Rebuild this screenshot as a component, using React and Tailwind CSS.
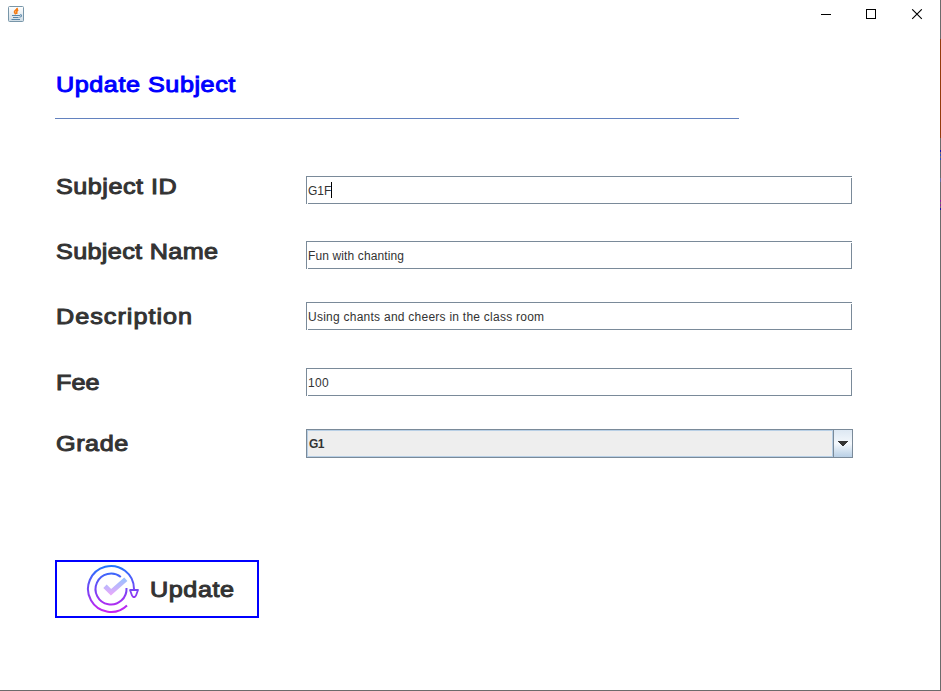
const labelFont =
  "font-['Liberation_Sans',Arial,sans-serif] text-[22.5px] leading-[28px] whitespace-nowrap [-webkit-text-stroke:1px_currentColor]";

const stretch = "inline-block origin-left scale-x-[1.12]";

function TextField({ value, caret, textClass = "" }) {
  return (
    <div className="relative flex h-[28px] w-[546px] items-center border border-[#7a8a99] bg-white pt-[2px] pl-[1px] font-['Liberation_Sans',Arial,sans-serif] text-[12px] text-[#333333]">
      <span className={`whitespace-pre ${textClass}`}>{value}</span>
      {caret && <span className="-mt-[2px] h-[16px] w-px bg-black" />}
      <span className="absolute top-0 -right-px h-px w-px bg-white" />
      <span className="absolute bottom-[-1px] left-0 h-px w-px bg-white" />
    </div>
  );
}

function ComboBox({ value }) {
  return (
    <div className="flex h-[29px] w-[547px] border border-[#7a8a99] bg-[#eeeeee]">
      <div className="flex flex-1 items-center border border-[#b8cfe5] font-['Liberation_Sans',Arial,sans-serif] text-[12px] font-bold tracking-[-0.6px] text-[#333333]">
        <span className="pl-px">{value}</span>
      </div>
      <div className="flex w-[19px] items-center justify-center border-l border-[#7a8a99] bg-linear-to-b from-[#dde8f3] via-[#f4f8fc] to-[#b8cfe5]">
        <svg width="10" height="5" viewBox="0 0 10 5" shapeRendering="crispEdges">
          <path d="M0 0H10V1H9V2H8V3H7V4H6V5H4V4H3V3H2V2H1V1H0Z" fill="#333333" />
        </svg>
      </div>
    </div>
  );
}

function JavaIcon() {
  return (
    <svg width="16" height="16" viewBox="0 0 16 16" fill="none">
      <defs>
        <linearGradient id="java-bg" x1="0" y1="0" x2="0" y2="1">
          <stop offset="0" stopColor="#ffffff" />
          <stop offset="1" stopColor="#cfdce5" />
        </linearGradient>
      </defs>
      <rect x="0.5" y="0.5" width="15" height="15" rx="1" fill="url(#java-bg)" stroke="#7896a9" />
      <path d="M9.2 1.8C9.6 4 5.8 4.4 6.6 6.4L7.8 8.2M10.2 3.8C8 4.8 8.8 6 8.6 7.8" stroke="#f57c14" strokeWidth="1.7" />
      <path d="M4 9.5H12M5 11.5H10.5M3.5 13.5H12M12 8.8H13.4V10.6L11.4 11.2" stroke="#5b87a8" strokeWidth="1" />
    </svg>
  );
}

function UpdateIcon() {
  return (
    <svg width="54" height="50" viewBox="0 0 54 50" fill="none">
      <defs>
        <linearGradient id="ring" gradientUnits="userSpaceOnUse" x1="0" y1="1" x2="0" y2="49">
          <stop offset="0" stopColor="#1f78ff" />
          <stop offset="0.5" stopColor="#7446f5" />
          <stop offset="1" stopColor="#cc21f0" />
        </linearGradient>
        <linearGradient id="check" gradientUnits="userSpaceOnUse" x1="0" y1="13" x2="0" y2="31">
          <stop offset="0" stopColor="#8fc4ff" />
          <stop offset="1" stopColor="#eba8fa" />
        </linearGradient>
      </defs>
      <g stroke="url(#ring)" strokeWidth="2">
        <path d="M41 41.5A23 23 0 1 1 48 25" />
        <path d="M34.8 13A15.5 15.5 0 1 0 40.5 24" />
        <path d="M44 26H52L50 31.5L48.8 33H47.2L46 31.5Z" strokeLinejoin="round" strokeWidth="1.8" />
      </g>
      <path d="M19 22.3L25 28.2L39.8 15.2" stroke="url(#check)" strokeWidth="4.8" />
    </svg>
  );
}

function Row({ label, labelClass, children, className }) {
  return (
    <div className={`flex items-start ${className}`}>
      <div className={`w-[251px] shrink-0 pl-[0.5px] text-[#333333] ${labelFont} ${labelClass}`}>
        <span className={stretch}>{label}</span>
      </div>
      {children}
    </div>
  );
}

export default function App() {
  return (
    <div className="flex h-[691px] w-[941px] overflow-hidden bg-white">
      <div className="flex w-[940px] flex-col border-b border-[#6b6b6b]">
        <header className="flex h-[30px] shrink-0 items-start justify-between">
          <div className="pt-[6px] pl-[8px]">
            <JavaIcon />
          </div>
          <div className="flex pt-[9px] pr-[17px]">
            <svg width="102" height="11" viewBox="0 0 102 11" fill="none" stroke="#000">
              <path d="M0 5.5H10M45.5 0.5H54.5V9.5H45.5Z" shapeRendering="crispEdges" />
              <path d="M91.2 0.3L100.8 9.9M100.8 0.3L91.2 9.9" strokeWidth="1.1" />
            </svg>
          </div>
        </header>
        <main className="flex flex-col items-start pl-[55px]">
          <h1 className={`mt-[41px] pl-[0.5px] text-[#0000ff] ${labelFont}`}>
            <span className={`${stretch} tracking-[0.48px]`}>Update Subject</span>
          </h1>
          <div className="mt-[19px] h-px w-[684px] bg-[#6382bf]" />
          <div className="mt-[57px] flex flex-col">
            <Row label="Subject ID" labelClass="-mt-[3px] tracking-[0.45px]" className="h-[65px]">
              <TextField value="G1F" caret />
            </Row>
            <Row label="Subject Name" labelClass="-mt-[3px] tracking-[0.3px]" className="h-[61px]">
              <TextField value="Fun with chanting" textClass="tracking-[0.12px]" />
            </Row>
            <Row label="Description" labelClass="mt-px tracking-[0.9px]" className="h-[66px]">
              <TextField value="Using chants and cheers in the class room" textClass="tracking-[0.25px]" />
            </Row>
            <Row label="Fee" labelClass="mt-px" className="h-[61px]">
              <TextField value="100" textClass="tracking-[0.3px]" />
            </Row>
            <Row label="Grade" labelClass="mt-px tracking-[0.5px]" className="h-[131px]">
              <ComboBox value="G1" />
            </Row>
          </div>
          <button className="flex h-[58px] w-[204px] items-center border-2 border-[#0000ff] bg-white pl-[29px] text-[#333333]">
            <UpdateIcon />
            <span className={`mt-[2px] ml-[9.5px] tracking-[0.5px] ${stretch} ${labelFont}`}>Update</span>
          </button>
        </main>
      </div>
      <div className="flex w-px flex-col bg-[#6b6b6b]">
        <span className="mt-[39px] h-[99px] bg-[#933b0d]" />
        <span className="mt-[12px] h-[2px] bg-[#1717a8]" />
        <span className="mt-[2px] h-[2px] bg-[#2c4fc0]" />
        <span className="mt-[2px] h-[2px] bg-[#2c4fc0]" />
        <span className="mt-[18px] h-[4px] bg-[#6670a8]" />
        <span className="mt-[18px] h-[2px] bg-[#8b249b]" />
        <span className="mt-[2px] h-[2px] bg-[#8b249b]" />
        <span className="mt-[2px] h-[2px] bg-[#1717a8]" />
      </div>
    </div>
  );
}
